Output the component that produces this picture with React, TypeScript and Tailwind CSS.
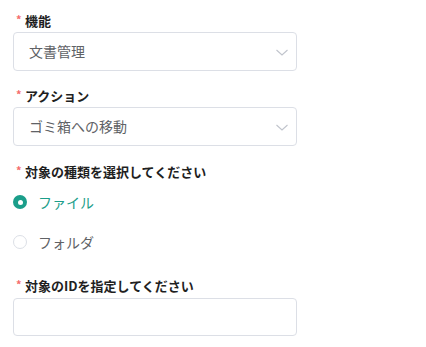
import { useState } from "react";

function Label({ text }: { text: React.ReactNode }) {
  return (
    <div className="flex items-center h-[18px] text-[13px] font-bold text-[#1f1f1f] leading-[18px]">
      <span className="text-[#f56c6c] text-[11px] w-[12px] pl-[3px] -mt-[4px]">*</span>
      {text}
    </div>
  );
}

function Select({ value }: { value: string }) {
  return (
    <div className="mt-[2px] h-[39px] w-[284px] border border-[#dcdfe6] rounded-[4px] bg-white flex items-center justify-between pl-[15px] pr-[7px]">
      <span className="text-[14px] text-[#606266]">{value}</span>
      <svg width="14" height="14" viewBox="0 0 14 14">
        <path d="M1.5 5 L7 10 L12.5 5" fill="none" stroke="#c0c4cc" strokeWidth="1.1" />
      </svg>
    </div>
  );
}

function Radio({ label, checked, onClick }: { label: string; checked: boolean; onClick: () => void }) {
  return (
    <button onClick={onClick} className="flex items-center h-[20px] gap-[11px] cursor-pointer">
      {checked ? (
        <span className="w-[14px] h-[14px] rounded-full bg-[#1b9e8a] flex items-center justify-center">
          <span className="w-[5px] h-[5px] rounded-full bg-white" />
        </span>
      ) : (
        <span className="w-[14px] h-[14px] rounded-full border border-[#dcdfe6] bg-white" />
      )}
      <span className={`text-[14px] ${checked ? "text-[#1b9e8a]" : "text-[#606266]"}`}>{label}</span>
    </button>
  );
}

export default function App() {
  const [kind, setKind] = useState<"file" | "folder">("file");

  return (
    <div className="w-[426px] h-[347px] bg-white pl-[13px] pt-[12px]" style={{ fontFamily: '"Noto Sans CJK JP", "Noto Sans", sans-serif' }}>
      <Label text="機能" />
      <Select value="文書管理" />

      <div className="mt-[16px]">
        <Label text="アクション" />
        <Select value="ゴミ箱への移動" />
      </div>

      <div className="mt-[17px]">
        <Label text="対象の種類を選択してください" />
        <div className="flex flex-col gap-[20px] mt-[11px]">
          <Radio label="ファイル" checked={kind === "file"} onClick={() => setKind("file")} />
          <Radio label="フォルダ" checked={kind === "folder"} onClick={() => setKind("folder")} />
        </div>
      </div>

      <div className="mt-[25px]">
        <Label text="対象のIDを指定してください" />
        <input className="mt-[3px] h-[38px] w-[284px] border border-[#dcdfe6] rounded-[4px] bg-white outline-none px-[15px] text-[14px]" />
      </div>
    </div>
  );
}
